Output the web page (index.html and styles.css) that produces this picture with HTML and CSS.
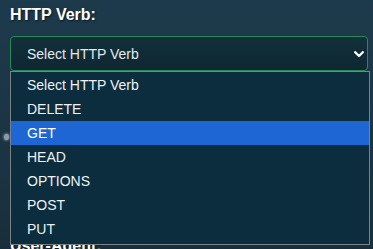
FILE: index.html
```html
<!DOCTYPE html>
<html lang="en">
<head>
    <meta charset="UTF-8">
    <meta name="viewport" content="width=device-width, initial-scale=1.0">
    <title>Request Builder</title>
    <link rel="stylesheet" href="styles.css">
</head>
<body>
    <div class="page">
        <div class="field verb-field">
            <label class="field-label">HTTP Verb:</label>
            <div class="select">
                <span>Select HTTP Verb</span>
                <svg class="chevron" width="10" height="7" viewBox="0 0 10 7">
                    <polyline points="1.2,1.2 5,5 8.8,1.2" fill="none" stroke="#ffffff" stroke-width="2.3" stroke-linecap="round" stroke-linejoin="round"/>
                </svg>
            </div>
            <ul class="options">
                <li>Select HTTP Verb</li>
                <li>DELETE</li>
                <li class="active">GET</li>
                <li>HEAD</li>
                <li>OPTIONS</li>
                <li>POST</li>
                <li>PUT</li>
            </ul>
        </div>

        <div class="field body-field">
            <div class="input"><span class="grip"></span></div>
        </div>

        <div class="field">
            <label class="field-label">User-Agent:</label>
            <div class="input"></div>
        </div>
    </div>
</body>
</html>
```

FILE: styles.css
```css
html, body {
    margin: 0;
    padding: 0;
    height: 100%;
}

body {
    font-family: "Liberation Sans", Arial, sans-serif;
    background: linear-gradient(180deg, #1d3a4c 0%, #1b3444 60%, #192e3b 100%);
    color: #e6ebee;
    overflow: hidden;
}

.page {
    padding: 6px 5px 0 10px;
}

.field {
    position: relative;
}

.field-label {
    display: block;
    font-size: 16px;
    font-weight: bold;
    line-height: 18px;
    color: #ffffff;
    text-shadow: 1px 1px 2px rgba(0, 0, 0, 0.6);
    margin: 0 0 12px;
}

.select {
    box-sizing: border-box;
    height: 35px;
    border: 1px solid #238a55;
    border-radius: 4px;
    background: linear-gradient(180deg, #12303b 0%, #0f2732 100%);
    display: flex;
    align-items: center;
    justify-content: space-between;
    padding: 0 3px 0 16px;
    font-size: 14px;
    color: #e4e9ec;
}

.chevron {
    display: block;
    margin-top: 1px;
}

.options {
    position: absolute;
    z-index: 5;
    top: 65px;
    left: 0;
    box-sizing: border-box;
    width: 360px;
    margin: 0;
    padding: 1px 0 3px;
    list-style: none;
    background: #0b2d3e;
    border: 1px solid #7b8185;
    font-size: 14px;
}

.options li {
    height: 24px;
    line-height: 24px;
    padding-left: 16px;
    color: #eef2f4;
}

.options li.active {
    background: #1e66d4;
    color: #ffffff;
}

.field + .field {
    margin-top: 12px;
}

.input {
    position: relative;
    box-sizing: border-box;
    height: 112px;
    border: 1px solid #2c4f60;
    border-radius: 4px;
    background: #12303b;
}

.body-field {
    padding-top: 30px;
}

.grip {
    position: absolute;
    left: -7px;
    top: 20px;
    width: 5px;
    height: 6px;
    border-radius: 50%;
    background: #8c9ba4;
    box-shadow: 0 0 2px 1px rgba(140, 155, 164, 0.6);
}
```
